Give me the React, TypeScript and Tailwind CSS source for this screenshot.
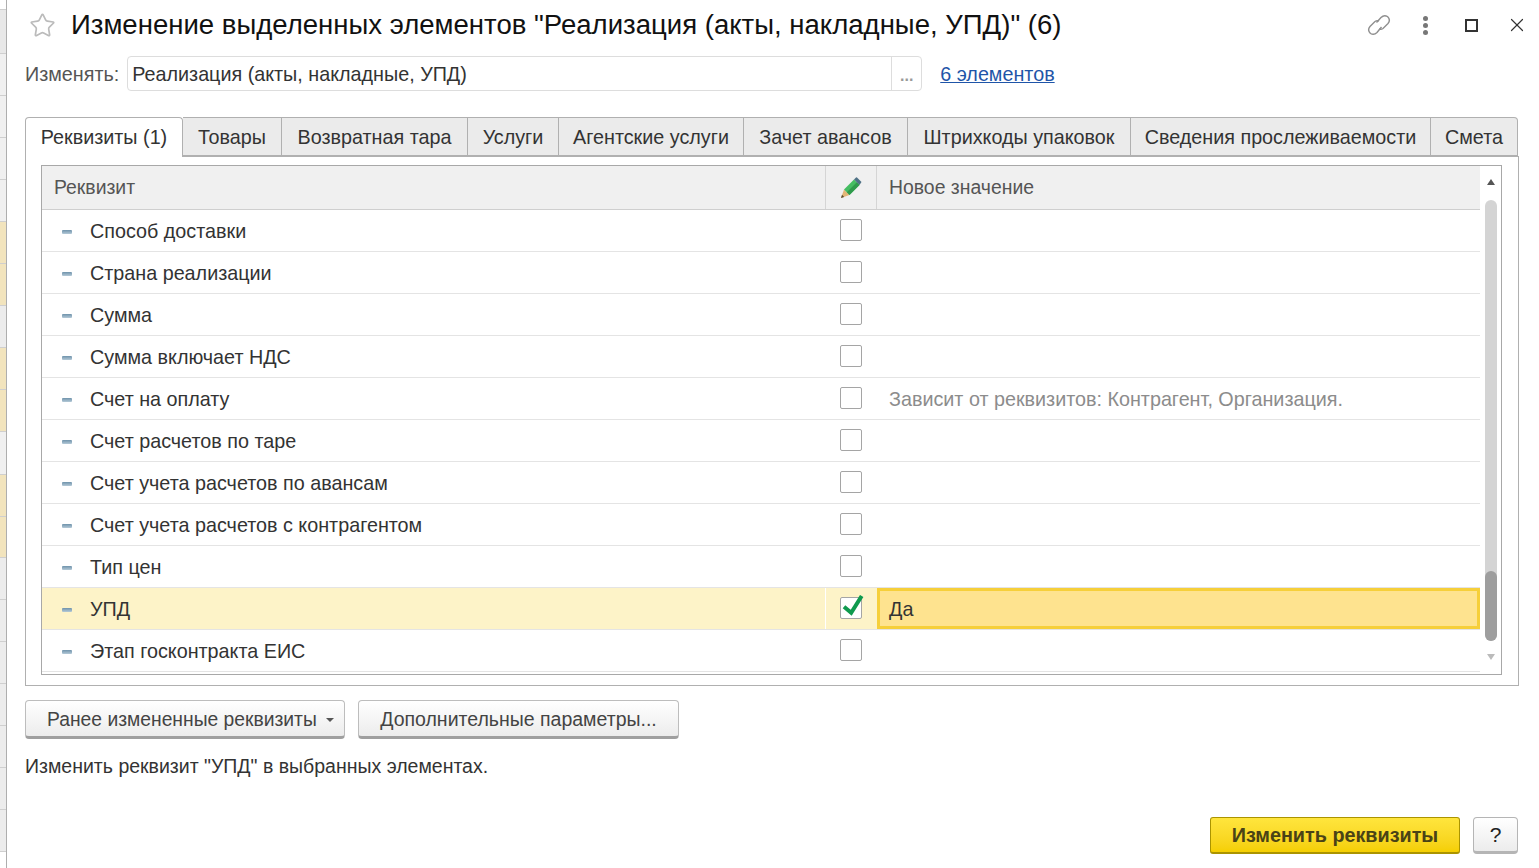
import { Star, X } from 'lucide-react';

const rows = [
  'Способ доставки',
  'Страна реализации',
  'Сумма',
  'Сумма включает НДС',
  'Счет на оплату',
  'Счет расчетов по таре',
  'Счет учета расчетов по авансам',
  'Счет учета расчетов с контрагентом',
  'Тип цен',
  'УПД',
  'Этап госконтракта ЕИС',
];

const tabs = [
  { label: 'Товары', w: 'w-[99px]' },
  { label: 'Возвратная тара', w: 'w-[186px]' },
  { label: 'Услуги', w: 'w-[91px]' },
  { label: 'Агентские услуги', w: 'w-[185px]' },
  { label: 'Зачет авансов', w: 'w-[164px]' },
  { label: 'Штрихкоды упаковок', w: 'w-[223px]' },
  { label: 'Сведения прослеживаемости', w: 'w-[300px]' },
  { label: 'Смета', w: 'w-[87px]' },
];

// strip of the window lying behind the dialog
const stripRows = [
  { h: 'h-[10px]', bg: 'bg-white' },
  { h: 'h-[44px]', bg: 'bg-[#e8e8e8]' },
  { h: 'h-[42px]', bg: 'bg-[#f0f0f0]' },
  { h: 'h-[42px]', bg: 'bg-[#f0f0f0]' },
  { h: 'h-[42px]', bg: 'bg-[#f0f0f0]' },
  { h: 'h-[42px]', bg: 'bg-[#f0f0f0]' },
  { h: 'h-[42px]', bg: 'bg-[#f2e4bd]' },
  { h: 'h-[42px]', bg: 'bg-[#f2e4bd]' },
  { h: 'h-[42px]', bg: 'bg-[#ececec]' },
  { h: 'h-[42px]', bg: 'bg-[#f2e4bd]' },
  { h: 'h-[42px]', bg: 'bg-[#f2e4bd]' },
  { h: 'h-[43px]', bg: 'bg-[#f0f0f0]' },
  { h: 'h-[42px]', bg: 'bg-[#f2e4bd]' },
  { h: 'h-[41px]', bg: 'bg-[#f2e4bd]' },
  { h: 'h-[42px]', bg: 'bg-[#ececec]' },
  { h: 'h-[42px]', bg: 'bg-[#ececec]' },
  { h: 'h-[42px]', bg: 'bg-[#ececec]' },
  { h: 'h-[42px]', bg: 'bg-[#ececec]' },
  { h: 'h-[42px]', bg: 'bg-[#ececec]' },
  { h: 'h-[42px]', bg: 'bg-[#ececec]' },
  { h: 'h-[42px]', bg: 'bg-[#ececec]' },
];

function Pencil() {
  return (
    <svg width="22" height="22" viewBox="0 0 22 22">
      <path d="M1 21 L4 12.5 L9.5 18 Z" fill="#e3b676" />
      <path d="M1 21 L2 17.8 L4.2 20 Z" fill="#5a4a30" />
      <path d="M4 12.5 L14 2.5 L19.5 8 L9.5 18 Z" fill="#45bd62" />
      <path d="M6.8 15.3 L16.8 5.3 L19.5 8 L9.5 18 Z" fill="#2f9a4c" />
      <path d="M14 2.5 L16 .5 Q16.5 0 17 .5 L21.5 5 L19.5 8 Z" fill="#4f7186" />
    </svg>
  );
}

function LinkIcon() {
  return (
    <svg width="26" height="26" viewBox="0 0 26 26" fill="none" stroke="#8f8f8f" strokeWidth="1.4">
      <path d="M10.5 10.5 L15 5.5 Q18 2.5 21.5 4.5 Q25 8 22 11.5 L17 16.5 Q15 18 13 17" />
      <path d="M15.5 15 L11 20.5 Q8 23.5 4.5 21.5 Q1 18 4 14.5 L9 9.5 Q11 8 13 9" />
    </svg>
  );
}

function Check() {
  return (
    <svg className="absolute -left-px -top-[3px]" width="24" height="24" viewBox="0 0 24 24" fill="none">
      <path d="M4 11.7 L11.2 17.7 L21.7 1" stroke="#0f9a4e" strokeWidth="4" />
    </svg>
  );
}

export default function App() {
  return (
    <div className="flex h-[868px] w-[1539px] overflow-hidden bg-white font-['Liberation_Sans',Arial,sans-serif] text-[#333]">
      <div className="flex w-[7px] shrink-0 flex-col overflow-hidden border-r border-[#aeaeae]">
        {stripRows.map((r, i) => (
          <div key={i} className={`${r.h} ${r.bg} shrink-0 border-b border-[#cfcfcf]`} />
        ))}
      </div>

      <div className="flex min-w-0 flex-1 flex-col pl-[18px] pr-[20px]">
        {/* Title */}
        <div className="flex h-[50px] items-center">
          <Star size={27} strokeWidth={1.5} className="ml-[4px] text-[#bbbbbb]" />
          <h1 className="ml-[15px] whitespace-nowrap text-[27.55px] font-normal text-[#111]">
            Изменение выделенных элементов "Реализация (акты, накладные, УПД)" (6)
          </h1>
          <div className="ml-auto flex items-center">
            <LinkIcon />
            <div className="ml-[31px] flex flex-col gap-[2px]">
              <span className="h-[5px] w-[5px] rounded-full bg-[#777]" />
              <span className="h-[5px] w-[5px] rounded-full bg-[#777]" />
              <span className="h-[5px] w-[5px] rounded-full bg-[#777]" />
            </div>
            <div className="ml-[37px] h-[13px] w-[13px] border-2 border-[#333]" />
            <X size={22} strokeWidth={1.3} className="ml-[28px] mr-[-9px] text-[#333]" />
          </div>
        </div>

        {/* Change target */}
        <div className="mt-[6px] flex h-[35px] items-center text-[19.75px]">
          <span className="pt-[2px] text-[#555]">Изменять:</span>
          <div className="ml-[8px] flex h-[35px] w-[795px] items-center rounded-[4px] border border-[#ddd]">
            <span className="flex-1 pl-[4px] pt-[2px] text-[#333]">Реализация (акты, накладные, УПД)</span>
            <span className="flex h-full w-[30px] items-center justify-center border-l border-[#ddd] pt-[4px] text-[16px] font-bold leading-none text-[#999]">
              ...
            </span>
          </div>
          <a className="ml-[18px] pt-[2px] text-[#1f55a8] underline">6 элементов</a>
        </div>

        {/* Tabs */}
        <div className="mt-[26px] flex h-[40px] items-stretch text-[19.75px]">
          <div className="relative z-10 flex h-[40px] w-[158px] shrink-0 items-center justify-center rounded-t-[4px] border border-b-0 border-[#b0b0b0] bg-white pt-[1px]">
            Реквизиты (1)
          </div>
          {tabs.map((t) => (
            <div
              key={t.label}
              className={`${t.w} flex h-[39px] shrink-0 items-center justify-center whitespace-nowrap border-b border-r border-t border-[#b0b0b0] bg-[#ebebeb] pt-[2px] last:rounded-tr-[4px]`}
            >
              {t.label}
            </div>
          ))}
        </div>

        {/* Panel */}
        <div className="-mt-px h-[530px] border border-[#b0b0b0] pl-[15px] pr-[16px] pt-[8px]">
          <div className="flex h-[510px] flex-col border border-[#a8a8a8]">
            <div className="flex min-h-0 flex-1">
              <div className="min-w-0 flex-1">
                <div className="flex h-[44px] border-b border-[#cfcfcf] bg-[#f0f0f0] text-[19.4px] text-[#555]">
                  <div className="flex w-[784px] items-center border-r border-[#d5d5d5] pt-[1px] pl-[12px]">Реквизит</div>
                  <div className="flex w-[51px] items-center justify-center border-r border-[#d5d5d5]">
                    <Pencil />
                  </div>
                  <div className="flex flex-1 items-center pt-[1px] pl-[12px]">Новое значение</div>
                </div>
                {rows.map((name) => {
                  const active = name === 'УПД';
                  return (
                    <div key={name} className={`flex h-[42px] border-b border-[#e4e4e4] text-[19.75px] ${active ? 'bg-[#fdf3c8]' : ''}`}>
                      <div className={`flex w-[784px] items-center pl-[20px] pt-[2px] ${active ? 'border-r border-white' : ''}`}>
                        <span className="h-[4px] w-[10px] rounded-[1px] bg-gradient-to-b from-[#6f93ab] to-[#b5cad8]" />
                        <span className="ml-[18px]">{name}</span>
                      </div>
                      <div className="flex w-[51px] items-center justify-center pb-[2px] pr-[2px]">
                        <div className="relative h-[22px] w-[22px] rounded-[2px] border border-[#a5a5a5] bg-white">
                          {active && <Check />}
                        </div>
                      </div>
                      {active ? (
                        <div className="flex flex-1 items-center border-[3px] border-[#f6cf3a] bg-[#fee38f] pl-[9px] pt-[2px] text-[#333]">Да</div>
                      ) : (
                        <div className="flex flex-1 items-center pl-[12px] pt-[2px] text-[#8c8c8c]">
                          {name === 'Счет на оплату' && 'Зависит от реквизитов: Контрагент, Организация.'}
                        </div>
                      )}
                    </div>
                  );
                })}
              </div>

              {/* Scrollbar */}
              <div className="flex w-[21px] shrink-0 flex-col items-center pt-[13px]">
                <span className="h-0 w-0 border-x-[4px] border-b-[6px] border-x-transparent border-b-[#555]" />
                <div className="mt-[15px] flex h-[441px] w-[12px] flex-col justify-end rounded-full bg-[#d4d4d4]">
                  <div className="h-[70px] rounded-full bg-[#9e9e9e]" />
                </div>
                <span className="mt-[13px] h-0 w-0 border-x-[4px] border-t-[6px] border-x-transparent border-t-[#bbb]" />
              </div>
            </div>
          </div>
        </div>

        {/* Secondary buttons */}
        <div className="mt-[14px] flex gap-[13px] text-[#444]">
          <button className="flex h-[39px] w-[320px] items-center gap-[9px] rounded-[4px] border border-[#bdbdbd] border-b-[3px] border-b-[#9f9f9f] bg-gradient-to-b from-white to-[#ececec] pl-[21px] pt-[3px] text-[19.3px]">
            Ранее измененные реквизиты
            <span className="h-0 w-0 border-x-[4px] border-t-[4px] border-x-transparent border-t-[#555]" />
          </button>
          <button className="flex h-[39px] w-[321px] items-center justify-center rounded-[4px] border border-[#bdbdbd] border-b-[3px] border-b-[#9f9f9f] bg-gradient-to-b from-white to-[#ececec] pt-[2px] text-[19.5px]">
            Дополнительные параметры...
          </button>
        </div>

        <div className="mt-[13px] text-[19.5px] text-[#333]">Изменить реквизит "УПД" в выбранных элементах.</div>

        {/* Footer */}
        <div className="mt-[36px] flex justify-end gap-[13px]">
          <button className="flex h-[37px] w-[250px] items-center justify-center rounded-[3px] border border-[#ab9400] border-b-[2px] bg-gradient-to-b from-[#ffe53c] to-[#f5cf00] pt-[2px] text-[19.8px] font-bold text-[#4a4316]">
            Изменить реквизиты
          </button>
          <button className="mr-[1px] flex h-[37px] w-[45px] items-center justify-center rounded-[4px] border border-[#b5b5b5] border-b-[3px] bg-gradient-to-b from-white to-[#ececec] text-[21px] text-[#222]">
            ?
          </button>
        </div>
      </div>
    </div>
  );
}
